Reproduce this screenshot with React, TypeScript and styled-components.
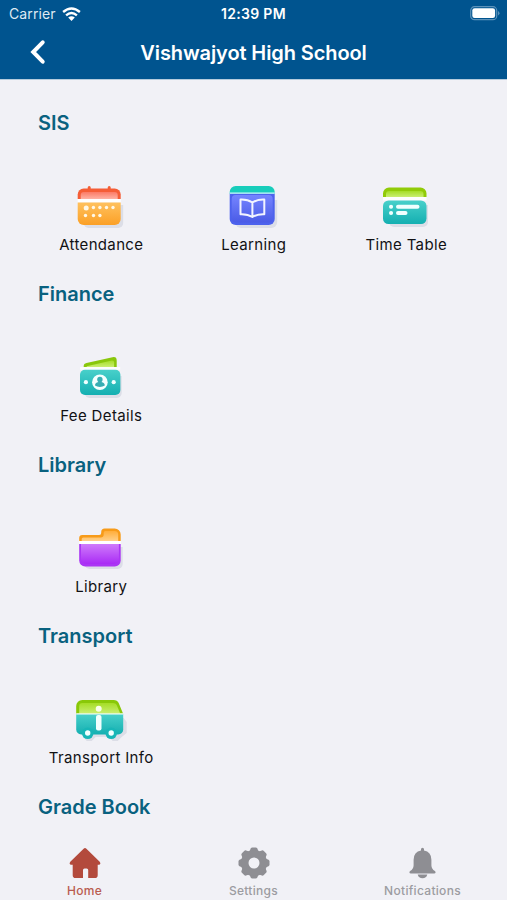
import React from "react";
import styled, { createGlobalStyle } from "styled-components";

const GlobalStyle = createGlobalStyle`
  * { box-sizing: border-box; }
  html, body { margin: 0; padding: 0; overflow: hidden; }
  body { background: #f1f1f6; font-family: Inter, "Liberation Sans", sans-serif; }
  svg { display: block; }
`;

const Screen = styled.div`
  width: 507px;
  height: 900px;
  display: flex;
  flex-direction: column;
  background: #f1f1f6;
  overflow: hidden;
`;

const Header = styled.header`
  flex: none;
  height: 79px;
  background: #00548f;
  color: #fff;
  box-shadow: 0 1px 0 #b4cbdd;
`;

const StatusBar = styled.div`
  display: grid;
  grid-template-columns: 1fr auto 1fr;
  align-items: center;
  height: 28px;
  padding: 0 7px 0 9px;
  line-height: 28px;
`;

const Carrier = styled.div`
  display: flex;
  align-items: center;
  gap: 6px;
  color: #dfeaf3;
  font-size: 14px;
  letter-spacing: 0.1px;
`;

const Clock = styled.div`
  margin-right: 2px;
  font-size: 14px;
  font-weight: 600;
  letter-spacing: 0.3px;
`;

const Battery = styled.div`
  justify-self: end;
  padding-bottom: 1px;
`;

const NavBar = styled.div`
  display: grid;
  grid-template-columns: 76px 1fr 76px;
  align-items: center;
  height: 49px;
`;

const BackButton = styled.button`
  padding: 0 0 2px 29px;
  border: 0;
  background: none;
  color: #fff;
`;

const Title = styled.h1`
  margin: 0;
  text-align: center;
  font-size: 20px;
  font-weight: 600;
  line-height: 28px;
  letter-spacing: -0.1px;
`;

const Content = styled.main`
  flex: 1;
  min-height: 0;
  overflow: hidden;
  padding: 30px 25px 0;
`;

const Section = styled.section`
  height: 171px;
`;

const Heading = styled.h2`
  margin: 0 0 0 13px;
  color: #09617f;
  font-size: 20px;
  line-height: 28px;
  font-weight: 600;
`;

const Grid = styled.div`
  display: grid;
  grid-template-columns: repeat(3, 152.5px);
  padding-top: 41px;
`;

const Tile = styled.a`
  display: flex;
  flex-direction: column;
  align-items: center;
`;

const Label = styled.span`
  height: 22px;
  color: #111114;
  font-size: 15px;
  line-height: 22px;
  white-space: nowrap;
  letter-spacing: 0.35px;
`;

const TabBar = styled.nav`
  flex: none;
  height: 60px;
  display: grid;
  grid-template-columns: repeat(3, 1fr);
  background: #f1f1f6;
`;

const Tab = styled.a<{ $active?: boolean }>`
  display: flex;
  flex-direction: column;
  align-items: center;
  padding-top: 7px;
  color: ${(p) => (p.$active ? "#b34a3c" : "#8e8e93")};
`;

const TabLabel = styled.span<{ $active?: boolean }>`
  margin-top: 4px;
  font-size: 12px;
  line-height: 16px;
  font-weight: 500;
  letter-spacing: 0.3px;
  color: ${(p) => (p.$active ? "#b95c50" : "#9c9ca1")};
`;

const Gradient = ({ id, from, to }: { id: string; from: string; to: string }) => (
  <linearGradient id={id} x1="0" y1="0" x2="0" y2="1">
    <stop offset="0" stopColor={from} />
    <stop offset="1" stopColor={to} />
  </linearGradient>
);

const IconFrame = ({ shift = 1.3, children }: { shift?: number; children: React.ReactNode }) => (
  <svg width="60" height="56" viewBox={`${shift} 0 60 56`}>
    <defs>
      <filter id="soft" x="-20%" y="-20%" width="140%" height="140%">
        <feGaussianBlur stdDeviation="0.6" />
      </filter>
      <Gradient id="orange" from="#ffc15e" to="#fba026" />
      <Gradient id="red" from="#fb7a65" to="#ffb2a4" />
      <Gradient id="indigo" from="#7585ff" to="#4a5be6" />
      <Gradient id="teal" from="#48d0ca" to="#14afb1" />
      <Gradient id="green" from="#a5dd25" to="#c9ee71" />
      <Gradient id="purple" from="#cf7bfb" to="#a92bf5" />
      <Gradient id="amber" from="#ffad3a" to="#ffd08a" />
    </defs>
    {children}
  </svg>
);

const Shadow = ({ d }: { d: string }) => <path d={d} fill="#dcdee7" filter="url(#soft)" />;

const AttendanceIcon = () => (
  <IconFrame>
    <Shadow d="M14 27h39.5v18a5 5 0 0 1-5 5H19a5 5 0 0 1-5-5z" />
    <path d="M19.5 9.500v4M39.5 9.500v4" stroke="#f45f35" strokeWidth="3" strokeLinecap="round" />
    <path d="M8 21v-4.500a6 6 0 0 1 6-6h31a6 6 0 0 1 6 6V21z" fill="#f55d36" />
    <path d="M11 21v-4a3 3 0 0 1 3-3h31a3 3 0 0 1 3 3v4z" fill="url(#red)" />
    <path d="M8 21h43v3.500H8z" fill="#fff" />
    <path d="M8 24.500h43V41a6 6 0 0 1-6 6H14a6 6 0 0 1-6-6z" fill="url(#orange)" />
    <g fill="#fff8e6">
      <circle cx="16.500" cy="30" r="2.500" />
      <circle cx="23.700" cy="29.500" r="1.700" />
      <circle cx="30.200" cy="29.500" r="1.700" />
      <circle cx="36.800" cy="29.500" r="1.700" />
      <circle cx="43.300" cy="29.500" r="1.700" />
      <circle cx="15.800" cy="37.500" r="1.700" />
      <circle cx="23.800" cy="37.500" r="1.700" />
      <circle cx="30.200" cy="37.500" r="1.700" />
    </g>
  </IconFrame>
);

const LearningIcon = () => (
  <IconFrame shift={1.8}>
    <Shadow d="M13 22h42v22a6 6 0 0 1-6 6H19a6 6 0 0 1-6-6z" />
    <path d="M7.500 16v-2a6 6 0 0 1 6-6h33a6 6 0 0 1 6 6v2z" fill="#18cdbb" />
    <path d="M7.500 15.500h45V41a6 6 0 0 1-6 6h-33a6 6 0 0 1-6-6z" fill="#4d62ed" />
    <rect x="9.500" y="17" width="41" height="27.500" rx="4" fill="url(#indigo)" />
    <path d="M7.500 15.200h45" stroke="#cbf8ff" strokeWidth="1.200" />
    <path d="M30.200 24.500C26.500 22 22.500 21.300 18.300 21.500v14.700c4.200-.2 8.200.4 11.900 2.800 3.700-2.400 7.700-3 11.900-2.800V21.500c-4.200-.2-8.200.5-11.900 3zV38" fill="none" stroke="#f2f4ff" strokeWidth="2" strokeLinejoin="round" />
  </IconFrame>
);

const TimeTableIcon = () => (
  <IconFrame shift={1}>
    <Shadow d="M14 27h39v17a5 5 0 0 1-5 5H19a5 5 0 0 1-5-5z" />
    <path d="M8 19v-3.500a6 6 0 0 1 6-6h31.500a6 6 0 0 1 6 6V19z" fill="#91cb08" />
    <path d="M11 19v-3a3 3 0 0 1 3-3h31.500a3 3 0 0 1 3 3v3z" fill="url(#green)" />
    <path d="M8 19h43.500v3.500H8z" fill="#fff" opacity=".85" />
    <rect x="8" y="22.500" width="43.500" height="23.500" rx="5.500" fill="url(#teal)" />
    <g stroke="#f0fffe" strokeWidth="4" strokeLinecap="round">
      <path d="M16 28.700h.1M23 28.700h19.500M16 35h.1M23 35h7.500" />
    </g>
  </IconFrame>
);

const FeeIcon = () => (
  <IconFrame>
    <Shadow d="M15 27h37v17a5 5 0 0 1-5 5H20a5 5 0 0 1-5-5z" />
    <path d="M14 18v-1q0-2.500 2.800-3l26-5.800q4.200-.8 4.200 3.300v6.500z" fill="#89c70b" />
    <path d="M17 18v-.8L42 11.500q2.400-.4 2.400 1.800V18z" fill="url(#green)" />
    <path d="M10.500 18h40v2.800h-40z" fill="#fff" opacity=".8" />
    <rect x="10.300" y="20.700" width="40.400" height="25.300" rx="5" fill="url(#teal)" />
    <circle cx="30.200" cy="33.200" r="7.800" fill="#f3fffe" />
    <circle cx="16.200" cy="33.200" r="2.100" fill="#efffff" />
    <circle cx="44" cy="33.200" r="2.100" fill="#efffff" />
    <circle cx="30.200" cy="30.500" r="2.700" fill="#37aeb3" />
    <path d="M28.700 31h3v2c2.300.7 3.400 1.500 3.400 3.600-2.700 1.900-7.100 1.900-9.800 0 0-2.100 1.100-2.900 3.400-3.600z" fill="#37aeb3" />
  </IconFrame>
);

const LibraryIcon = () => (
  <IconFrame>
    <Shadow d="M15 27h38v17a5 5 0 0 1-5 5H20a5 5 0 0 1-5-5z" />
    <path d="M9.500 21v-3a3 3 0 0 1 3-3h17a2 2 0 0 0 2-2v-1a3.500 3.500 0 0 1 3.500-3.500h10a6 6 0 0 1 6 6V21z" fill="#f79b19" />
    <path d="M12 21v-2a1.500 1.500 0 0 1 1.500-1.500H31a3 3 0 0 0 3-3v-1.800a1.700 1.700 0 0 1 1.700-1.700H45a3.500 3.500 0 0 1 3.500 3.500V21z" fill="url(#amber)" />
    <path d="M9.500 21h41.500v3H9.500z" fill="#fff" />
    <path d="M9.500 24H51v16.500a6 6 0 0 1-6 6H15.500a6 6 0 0 1-6-6z" fill="#ab35f4" />
    <path d="M11.300 24h37.900v15a5 5 0 0 1-5 5H16.300a5 5 0 0 1-5-5z" fill="url(#purple)" />
  </IconFrame>
);

const TransportIcon = () => (
  <IconFrame>
    <Shadow d="M13 27h41l3 4v11l-5 4-4 4h-5l-4-4H26l-4 4h-5l-4-5z" />
    <path d="M6.500 23v-8a6 6 0 0 1 6-6H44q3.500 0 5 3l4.500 11z" fill="#89c808" />
    <path d="M9.500 22.500V15a3 3 0 0 1 3-3h31q2.500 0 3.500 2l3.500 8.500z" fill="url(#green)" />
    <path d="M6.500 23h47v15.500a5 5 0 0 1-5 5h-37a5 5 0 0 1-5-5z" fill="url(#teal)" />
    <path d="M6.500 22.800h47" stroke="#f4fffb" strokeWidth="1.300" />
    <circle cx="18" cy="42.300" r="5.800" fill="#18b6b7" />
    <circle cx="41.500" cy="42.300" r="5.800" fill="#18b6b7" />
    <circle cx="18" cy="42" r="2.700" fill="#f1ffff" />
    <circle cx="41.500" cy="42" r="2.700" fill="#f1ffff" />
    <circle cx="29" cy="17.800" r="3" fill="#f9ffe9" />
    <rect x="26.300" y="24" width="5.500" height="15.500" rx="2" fill="#f1fffe" />
  </IconFrame>
);

const WifiIcon = () => (
  <svg width="19" height="15" viewBox="0 0 19 15" fill="none" stroke="#fff" strokeWidth="2.400">
    <path d="M1.100 5Q9.500-2.200 17.900 5" />
    <path d="M4.100 8.400Q9.500 3.700 14.900 8.400" />
    <path d="M6.200 10.500Q9.500 7.800 12.800 10.500L9.500 14z" fill="#fff" stroke="none" />
  </svg>
);

const BatteryIcon = () => (
  <svg width="30" height="15" viewBox="0 0 30 15">
    <rect x=".7" y=".7" width="26" height="13" rx="3.800" fill="none" stroke="#5c92ba" strokeWidth="1.200" />
    <rect x="2.300" y="2.300" width="22.800" height="9.800" rx="2.300" fill="#fff" />
    <path d="M28 5v4.400q1.500-.8 1.500-2.200T28 5z" fill="#5c92ba" />
  </svg>
);

const BackIcon = () => (
  <svg width="18" height="26" viewBox="0 0 18 26" fill="none" stroke="#fff" strokeWidth="4" strokeLinecap="round">
    <path d="M13.700 3.300 4.200 13l9.500 9.700" />
  </svg>
);

const HomeIcon = () => (
  <svg width="32" height="32" viewBox="0 0 32 32" fill="currentColor">
    <path d="M14.600 1.700q1.400-1.300 2.800 0l13.300 13.100q1.300 1.500.3 2.500-.5.500-2 .5h-.3v10.500q0 2.800-2.800 2.800h-6.700v-8.200q0-1.500-1.500-1.500h-2.200q-1.500 0-1.500 1.500v8.200H6.500q-2.800 0-2.800-2.800V17.800h-.700q-1.500 0-2-.5-1-1 .3-2.500z" />
  </svg>
);

const GearIcon = () => (
  <svg width="32" height="32" viewBox="0 0 32 32">
    <g fill="currentColor" transform="translate(16 16)">
      {[0, 45, 90, 135, 180, 225, 270, 315].map((angle) => (
        <path key={angle} d="M-4.600-11.500-3.300-14.500Q-2.800-15.500-1.600-15.500H1.600Q2.800-15.500 3.300-14.500L4.600-11.500z" transform={`rotate(${angle})`} />
      ))}
    </g>
    <circle cx="16" cy="16" r="9.300" fill="none" stroke="currentColor" strokeWidth="7.600" />
  </svg>
);

const BellIcon = () => (
  <svg width="32" height="32" viewBox="0.500 0 32 32" fill="currentColor">
    <path d="M14.500 3.500V2.300a1.500 1.500 0 0 1 3 0v1.200q7.300 1.300 7.400 9.200v5.500q0 3.600 3.500 5.900.8.600.7 1.300-.2 1-1.500 1H4.400q-1.300 0-1.500-1-.1-.7.700-1.300 3.500-2.300 3.500-5.900v-5.500q.1-7.900 7.400-9.200z" />
    <path d="M11.200 27.500h9.600q-.9 3.800-4.800 3.800t-4.800-3.800z" />
  </svg>
);

const sections = [
  {
    title: "SIS",
    items: [
      { label: "Attendance", Icon: AttendanceIcon },
      { label: "Learning", Icon: LearningIcon },
      { label: "Time Table", Icon: TimeTableIcon },
    ],
  },
  { title: "Finance", items: [{ label: "Fee Details", Icon: FeeIcon }] },
  { title: "Library", items: [{ label: "Library", Icon: LibraryIcon }] },
  { title: "Transport", items: [{ label: "Transport Info", Icon: TransportIcon }] },
  { title: "Grade Book", items: [] },
];

const tabs = [
  { label: "Home", Icon: HomeIcon, active: true },
  { label: "Settings", Icon: GearIcon, active: false },
  { label: "Notifications", Icon: BellIcon, active: false },
];

export default function App() {
  return (
    <>
      <GlobalStyle />
      <Screen>
        <Header>
          <StatusBar>
            <Carrier>
              Carrier
              <WifiIcon />
            </Carrier>
            <Clock>12:39 PM</Clock>
            <Battery>
              <BatteryIcon />
            </Battery>
          </StatusBar>
          <NavBar>
            <BackButton aria-label="Back">
              <BackIcon />
            </BackButton>
            <Title>Vishwajyot High School</Title>
          </NavBar>
        </Header>
        <Content>
          {sections.map(({ title, items }) => (
            <Section key={title}>
              <Heading>{title}</Heading>
              <Grid>
                {items.map(({ label, Icon }) => (
                  <Tile key={label}>
                    <Icon />
                    <Label>{label}</Label>
                  </Tile>
                ))}
              </Grid>
            </Section>
          ))}
        </Content>
        <TabBar>
          {tabs.map(({ label, Icon, active }) => (
            <Tab key={label} $active={active}>
              <Icon />
              <TabLabel $active={active}>{label}</TabLabel>
            </Tab>
          ))}
        </TabBar>
      </Screen>
    </>
  );
}
